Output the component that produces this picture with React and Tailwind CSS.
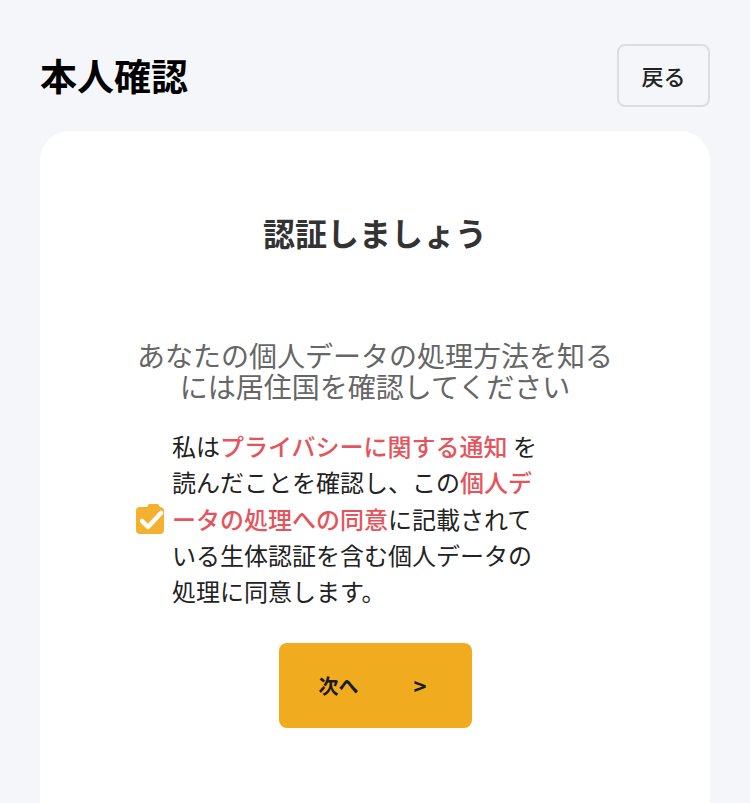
import React from 'react';

const font = { fontFamily: '"Noto Sans CJK JP", "Noto Sans", sans-serif' };

function CheckIcon() {
  return (
    <svg width="30" height="32" viewBox="0 0 30 32" className="shrink-0">
      <path d="M4 4h7l2-3h9l2 3h0a4 4 0 0 1 4 4v19a4 4 0 0 1-4 4H4a4 4 0 0 1-4-4V8a4 4 0 0 1 4-4z" fill="#f4b02f" />
      <path d="M6 18l6 6L25 10" stroke="#fff" strokeWidth="4.5" fill="none" strokeLinecap="round" strokeLinejoin="round" />
    </svg>
  );
}

export default function App() {
  return (
    <div className="min-h-screen bg-[#f5f6fa] px-10 pt-[44px]" style={font}>
      {/* header */}
      <div className="flex items-center justify-between">
        <h1 className="text-[37px] font-bold leading-none text-black">本人確認</h1>
        <button className="h-[63px] w-[93px] rounded-lg border-2 border-[#dcdde2] bg-[#f5f6fa] text-[22px] font-medium text-[#222]">
          戻る
        </button>
      </div>

      {/* card */}
      <div className="mt-6 flex h-[700px] flex-col items-center rounded-t-[30px] bg-white pt-[77px]">
        <h2 className="text-[32px] font-bold leading-[48px] text-[#333]">認証しましょう</h2>

        <p className="mt-[84px] w-[490px] text-center text-[28px] leading-[31px] text-[#666]">
          あなたの個人データの処理方法を知るには居住国を確認してください
        </p>

        <div className="mt-[26px] flex w-[480px] items-center gap-[6px] pl-[1px]">
          <CheckIcon />
          <p className="w-[370px] text-[24px] leading-[36.3px] text-[#222]">
            私は<span className="font-medium text-[#e5545b]">プライバシーに関する通知</span> を読んだことを確認し、この<span className="font-medium text-[#e5545b]">個人データの処理への同意</span>に記載されている生体認証を含む個人データの処理に同意します。
          </p>
        </div>

        <button className="mt-[34px] flex h-[85px] w-[193px] items-center rounded-lg bg-[#f0ab1e] pl-10 text-[20px] font-bold text-[#1a1a1a]">
          <span>次へ</span>
          <span className="ml-[55px] text-[22px]">&gt;</span>
        </button>
      </div>
    </div>
  );
}
